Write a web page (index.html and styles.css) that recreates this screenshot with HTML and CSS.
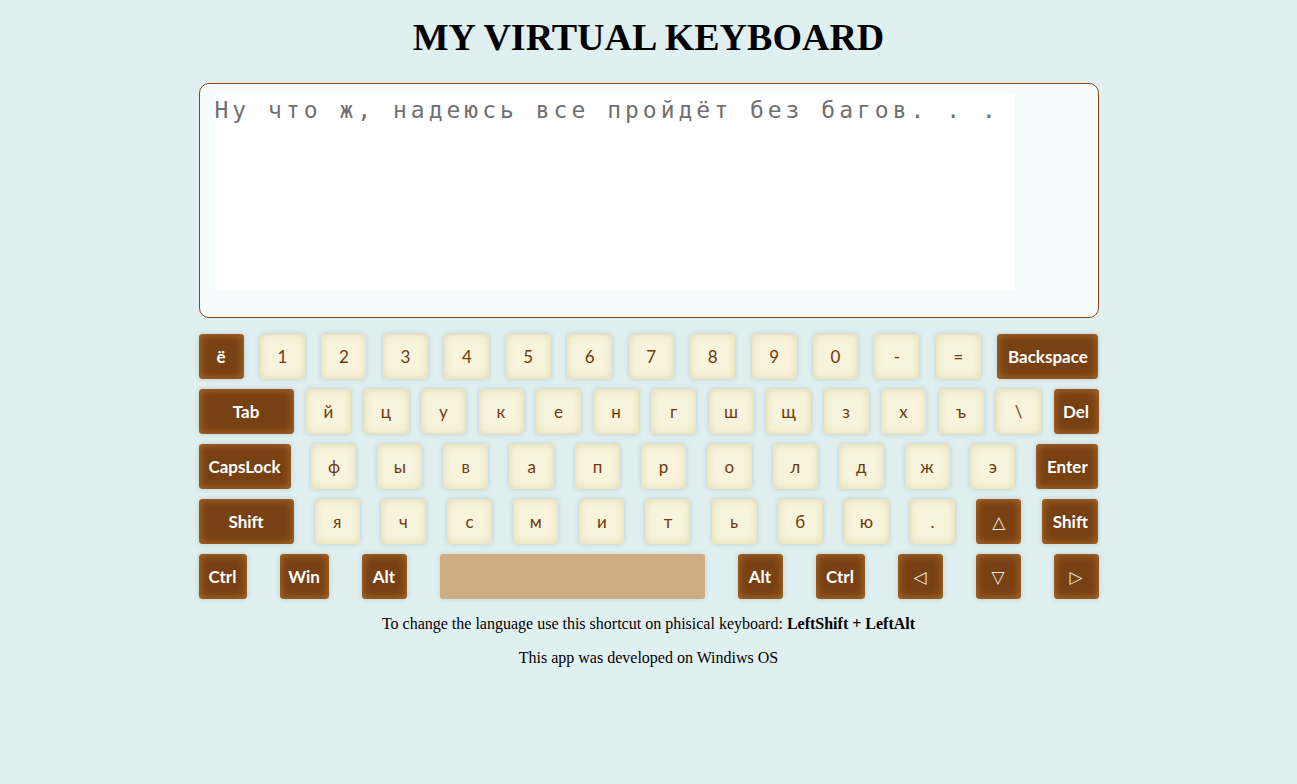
FILE: index.html
```html
<!DOCTYPE html>
<html lang="ru">
<head>
<meta charset="utf-8">
<title>Virtual Keyboard</title>
<link rel="stylesheet" href="styles.css">
</head>
<body>
<h1 class="title">MY VIRTUAL KEYBOARD</h1>
<main class="wrap">
  <div class="screen">
    <textarea class="area" spellcheck="false">Ну что ж, надеюсь все пройдёт без багов. . .</textarea>
  </div>
  <div class="keyboard">
    <div class="row">
      <div class="key dark">ё</div>
      <div class="key">1</div><div class="key">2</div><div class="key">3</div><div class="key">4</div><div class="key">5</div><div class="key">6</div><div class="key">7</div><div class="key">8</div><div class="key">9</div><div class="key">0</div><div class="key">-</div><div class="key">=</div>
      <div class="key dark w-back">Backspace</div>
    </div>
    <div class="row">
      <div class="key dark w-tab">Tab</div>
      <div class="key">й</div><div class="key">ц</div><div class="key">у</div><div class="key">к</div><div class="key">е</div><div class="key">н</div><div class="key">г</div><div class="key">ш</div><div class="key">щ</div><div class="key">з</div><div class="key">х</div><div class="key">ъ</div><div class="key">\</div>
      <div class="key dark">Del</div>
    </div>
    <div class="row">
      <div class="key dark w-caps">CapsLock</div>
      <div class="key">ф</div><div class="key">ы</div><div class="key">в</div><div class="key">а</div><div class="key">п</div><div class="key">р</div><div class="key">о</div><div class="key">л</div><div class="key">д</div><div class="key">ж</div><div class="key">э</div>
      <div class="key dark w-enter">Enter</div>
    </div>
    <div class="row">
      <div class="key dark w-tab">Shift</div>
      <div class="key">я</div><div class="key">ч</div><div class="key">с</div><div class="key">м</div><div class="key">и</div><div class="key">т</div><div class="key">ь</div><div class="key">б</div><div class="key">ю</div><div class="key">.</div>
      <div class="key dark arrow">△</div>
      <div class="key dark w-rshift">Shift</div>
    </div>
    <div class="row">
      <div class="key dark w-ctrl">Ctrl</div>
      <div class="key dark w-win">Win</div>
      <div class="key dark">Alt</div>
      <div class="key space"></div>
      <div class="key dark">Alt</div>
      <div class="key dark w-win">Ctrl</div>
      <div class="key dark arrow">◁</div>
      <div class="key dark arrow">▽</div>
      <div class="key dark arrow">▷</div>
    </div>
  </div>
  <p class="note">To change the language use this shortcut on phisical keyboard: <b>LeftShift + LeftAlt</b></p>
  <p class="note">This app was developed on Windiws OS</p>
</main>
</body>
</html>
```
FILE: styles.css
```css
html, body {
  margin: 0;
  padding: 0;
}
body {
  background: #e0eff0;
  font-family: "Liberation Serif", "Times New Roman", serif;
  color: #000;
}
.title {
  margin: 16px 0 0;
  font-size: 38px;
  line-height: 42px;
  font-weight: bold;
  text-align: center;
}
.wrap {
  width: 900px;
  margin: 25px auto 0;
}
.screen {
  box-sizing: border-box;
  width: 900px;
  height: 235px;
  border: 1px solid #8b4513;
  border-radius: 10px;
  background: #f8fbfb;
  padding: 9px 84px 27px 15px;
}
.area {
  display: block;
  box-sizing: border-box;
  width: 800px;
  height: 197px;
  margin: 0;
  padding: 4px 0 0 0;
  border: none;
  outline: none;
  resize: none;
  background: #fff;
  color: #707070;
  font-family: "DejaVu Sans Mono", monospace;
  font-size: 23px;
  line-height: 27px;
  letter-spacing: 4px;
  overflow: hidden;
}
.keyboard {
  display: flex;
  flex-direction: column;
  gap: 10px;
  margin-top: 16px;
}
.row {
  display: flex;
  justify-content: space-between;
}
.key {
  box-sizing: border-box;
  width: 45px;
  height: 45px;
  flex: none;
  display: flex;
  align-items: center;
  justify-content: center;
  border-radius: 4px;
  background: #f7f3dc;
  box-shadow: inset 0 0 8px #e2d6ae, 0 0 5px rgba(90, 120, 125, 0.28);
  color: #6e3a10;
  font-family: Lato, "Open Sans", sans-serif;
  font-size: 17px;
}
.key.dark {
  background: #784113;
  box-shadow: inset 0 0 10px #b4702f, 0 0 5px rgba(90, 120, 125, 0.3);
  color: #fff;
  font-weight: bold;
}
.key.arrow {
  font-weight: normal;
  font-family: "DejaVu Sans", sans-serif;
  font-size: 17px;
  color: #f0e8e0;
}
.key.space {
  width: 265px;
  background: #cdae84;
  box-shadow: 0 0 4px rgba(90, 120, 125, 0.25);
  border-radius: 3px;
}
.w-back { width: 101px; }
.w-tab { width: 95px; }
.w-caps { width: 92px; }
.w-enter { width: 62px; }
.w-rshift { width: 56px; }
.w-ctrl { width: 48px; }
.w-win { width: 49px; }
.note {
  margin: 16px 0 0;
  font-size: 16px;
  line-height: 18px;
  text-align: center;
}
```
